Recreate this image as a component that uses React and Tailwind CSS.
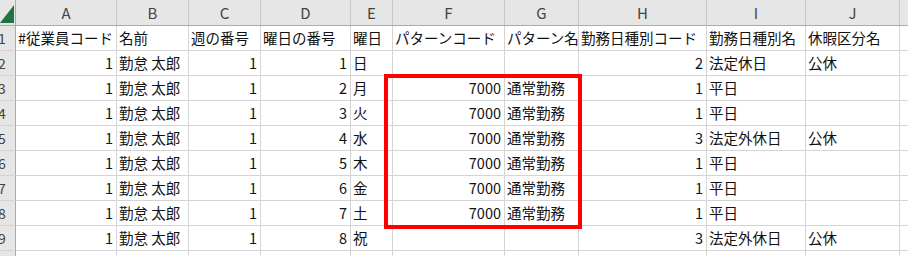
import React from 'react';

const cols = [
  { key: 'A', w: 101, num: true },
  { key: 'B', w: 72 },
  { key: 'C', w: 72, num: true },
  { key: 'D', w: 90, num: true },
  { key: 'E', w: 42 },
  { key: 'F', w: 112, num: true },
  { key: 'G', w: 74 },
  { key: 'H', w: 128, num: true },
  { key: 'I', w: 99 },
  { key: 'J', w: 94 },
  { key: '', w: 60 },
];

const headerRow = ['#従業員コード', '名前', '週の番号', '曜日の番号', '曜日', 'パターンコード', 'パターン名', '勤務日種別コード', '勤務日種別名', '休暇区分名', ''];

const days = [
  ['日', '', '', '2', '法定休日', '公休'],
  ['月', '7000', '通常勤務', '1', '平日', ''],
  ['火', '7000', '通常勤務', '1', '平日', ''],
  ['水', '7000', '通常勤務', '3', '法定外休日', '公休'],
  ['木', '7000', '通常勤務', '1', '平日', ''],
  ['金', '7000', '通常勤務', '1', '平日', ''],
  ['土', '7000', '通常勤務', '1', '平日', ''],
  ['祝', '', '', '3', '法定外休日', '公休'],
];

const rows = [
  headerRow,
  ...days.map((d, i) => ['1', '勤怠 太郎', '1', String(i + 1), d[0], d[1], d[2], d[3], d[4], d[5], '']),
  Array(11).fill(''),
];

const RowHeader = ({ n }) => (
  <div className="w-[16px] shrink-0 h-full overflow-hidden bg-[#e6e6e6] border-r border-r-[#ababab] border-b border-b-[#d4d4d4]">
    <div className="w-[26px] -ml-[11px] text-center text-[14px] leading-[24px] text-[#444]">{n}</div>
  </div>
);

const App = () => {
  return (
    <div
      className="relative w-[908px] h-[256px] overflow-hidden bg-white text-[14.5px] text-[#111]"
      style={{ fontFamily: '"Noto Sans CJK JP", "Noto Sans", sans-serif' }}
    >
      {/* column letters */}
      <div className="flex h-[26px] bg-[#e6e6e6] border-b border-b-[#ababab]">
        <div className="w-[16px] shrink-0 border-r border-r-[#ababab] relative">
          <svg width="16" height="25" className="absolute left-0 top-0">
            <polygon points="14,5 14,23 0,23" fill="#217346" />
          </svg>
        </div>
        {cols.map((c, i) => (
          <div
            key={i}
            style={{ width: c.w }}
            className="shrink-0 border-r border-r-[#c8c8c8] text-center text-[15px] leading-[25px] text-[#444]"
          >
            {c.key}
          </div>
        ))}
      </div>

      {rows.map((r, ri) => (
        <div key={ri} className="flex h-[25px]">
          <RowHeader n={ri + 1} />
          {cols.map((c, ci) => {
            const isNum = ri > 0 && c.num;
            return (
              <div
                key={ci}
                style={{ width: c.w }}
                className={`shrink-0 overflow-hidden whitespace-nowrap border-r border-b border-[#d4d4d4] leading-[24px] ${
                  isNum ? 'text-right pr-[3px]' : 'text-left pl-[2px]'
                }`}
              >
                {r[ci]}
              </div>
            );
          })}
        </div>
      ))}

      {/* highlight box */}
      <div className="absolute left-[384px] top-[74px] w-[198px] h-[155px] border-4 border-[#ff0000]" />
    </div>
  );
};

export default App;
